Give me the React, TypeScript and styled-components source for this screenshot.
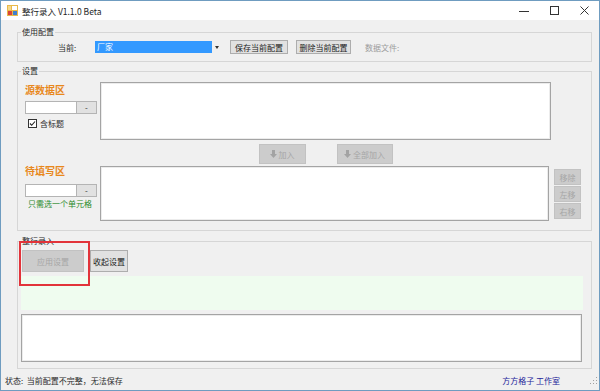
import React from 'react';
import styled, { createGlobalStyle } from 'styled-components';

const GlobalStyle = createGlobalStyle`
  html, body {
    margin: 0;
    padding: 0;
    background: #f0f0f0;
  }
  body {
    font-family: "Noto Sans CJK SC", "Noto Sans", sans-serif;
    font-size: 8px;
    color: #2b2b2b;
  }
  * {
    box-sizing: border-box;
  }
`;

const Window = styled.div`
  width: 600px;
  height: 391px;
  border: 1px solid #6f9cc0;
  background: #f0f0f0;
  display: flex;
  flex-direction: column;
  overflow: hidden;
`;

const TitleBar = styled.div`
  height: 19px;
  background: #ffffff;
  display: flex;
  align-items: center;
  padding-left: 6px;
`;

const TitleText = styled.span`
  margin-left: 4px;
  font-size: 8.5px;
  color: #1e1e1e;
  flex: 1;
`;

const WinButton = styled.div`
  width: 30px;
  height: 19px;
  display: flex;
  align-items: center;
  justify-content: center;
`;

const Body = styled.div`
  flex: 1;
  padding: 6px 7px 0 16px;
`;

const Group = styled.fieldset<{ $top: number }>`
  margin: ${(p) => p.$top}px 0 0;
  padding: 0;
  min-width: 0;
  border: 1px solid #d6d6d6;
  border-radius: 0;
`;

const Legend = styled.legend`
  margin-left: 3px;
  padding: 0 1px;
  font-size: 8px;
  line-height: 12px;
  color: #2b2b2b;
`;

const ConfigRow = styled.div`
  display: flex;
  align-items: center;
  height: 14px;
  margin: 2px 0 7px;
  padding-left: 40px;
`;

const FieldLabel = styled.span`
  width: 37px;
`;

const Combo = styled.div`
  width: 127px;
  height: 12px;
  display: flex;
  align-items: center;
`;

const ComboValue = styled.div`
  width: 117px;
  height: 12px;
  background: #3399ff;
  color: #ffffff;
  line-height: 12px;
  padding-left: 2px;
`;

const ComboArrow = styled.div`
  flex: 1;
  display: flex;
  justify-content: center;
  &::after {
    content: '';
    border-left: 2px solid transparent;
    border-right: 2px solid transparent;
    border-top: 3px solid #333;
  }
`;

const Button = styled.button<{ $w: number; $h: number; $gap?: number; $off?: boolean }>`
  width: ${(p) => p.$w}px;
  height: ${(p) => p.$h}px;
  margin: 0 0 0 ${(p) => p.$gap ?? 0}px;
  padding: 0;
  font-family: inherit;
  font-size: 8px;
  color: ${(p) => (p.$off ? '#a6a6a6' : '#222')};
  background: ${(p) => (p.$off ? '#cccccc' : '#e1e1e1')};
  border: 1px solid ${(p) => (p.$off ? '#c2c2c2' : '#adadad')};
  display: flex;
  align-items: center;
  justify-content: center;
  gap: 2px;
`;

const DataLabel = styled.span`
  margin-left: 14px;
  color: #9c9c9c;
`;

const Settings = styled.div`
  padding: 0 0 9px 7px;
`;

const AreaRow = styled.div<{ $top: number }>`
  display: flex;
  align-items: flex-start;
  margin-top: ${(p) => p.$top}px;
`;

const LeftCol = styled.div`
  width: 72px;
  margin-right: 3px;
  display: flex;
  flex-direction: column;
`;

const AreaTitle = styled.div<{ $top: number }>`
  margin-top: ${(p) => p.$top}px;
  font-size: 10px;
  line-height: 10px;
  font-weight: 700;
  color: #e8881c;
`;

const RangeInput = styled.div<{ $top: number }>`
  margin-top: ${(p) => p.$top}px;
  height: 13px;
  display: flex;
  border: 1px solid #b4b4b4;
  background: #ffffff;
`;

const RangeText = styled.div`
  flex: 1;
`;

const RangePick = styled.div`
  width: 20px;
  background: #e1e1e1;
  border-left: 1px solid #b4b4b4;
  display: flex;
  align-items: center;
  justify-content: center;
  font-size: 8px;
  line-height: 8px;
`;

const CheckRow = styled.label`
  margin-top: 5px;
  padding-left: 3px;
  display: flex;
  align-items: center;
  gap: 3px;
  line-height: 9px;
`;

const CheckBox = styled.span`
  width: 9px;
  height: 9px;
  border: 1px solid #333;
  background: #fff;
  display: flex;
  align-items: center;
  justify-content: center;
`;

const Hint = styled.div`
  margin-top: 2px;
  padding-left: 3px;
  line-height: 9px;
  color: #2a8a2a;
`;

const TextBox = styled.div<{ $w: number; $h: number }>`
  width: ${(p) => p.$w}px;
  height: ${(p) => p.$h}px;
  background: #ffffff;
  border: 1px solid #a4a4a4;
  box-shadow: inset 0 0 0 1px #ececec;
`;

const ActionRow = styled.div`
  margin: 4px 0 0 75px;
  width: 451px;
  display: flex;
  justify-content: center;
  gap: 31px;
`;

const SideCol = styled.div`
  margin: 3px 0 0 5px;
  display: flex;
  flex-direction: column;
  gap: 1px;
`;

const Entry = styled.div`
  padding: 0 8px 6px 3px;
`;

const EntryButtons = styled.div`
  position: relative;
  margin-top: 3px;
  padding-left: 1px;
  display: flex;
`;

const Highlight = styled.div`
  position: absolute;
  left: -2px;
  top: -9px;
  width: 71px;
  height: 45px;
  border: 2px solid #e2333a;
  pointer-events: none;
`;

const LogArea = styled.div`
  margin-top: 4px;
  height: 34px;
  background: #effcef;
`;

const StatusBar = styled.div`
  height: 19px;
  display: flex;
  align-items: center;
  padding: 0 1px 0 4px;
`;

const StatusText = styled.span`
  flex: 1;
`;

const Credit = styled.span`
  color: #24249a;
  margin-right: 30px;
`;

const DownArrow = () => (
  <svg width="7" height="8" viewBox="0 0 7 8">
    <path d="M2 0h3v4h2L3.5 8 0 4h2z" fill="#a3a3a3" />
  </svg>
);

const AppIcon = () => (
  <svg width="11" height="11" viewBox="0 0 11 11">
    <rect x="0" y="0" width="11" height="11" fill="#e9b949" />
    <rect x="5" y="1" width="5" height="4" fill="#ffffff" />
    <rect x="1" y="6" width="4" height="4" fill="#d9443a" />
    <rect x="6" y="6" width="4" height="4" fill="#3f7fd0" />
    <rect x="1" y="1" width="3" height="4" fill="#f5d98c" />
  </svg>
);

export default function App() {
  return (
    <>
      <GlobalStyle />
      <Window>
        <TitleBar>
          <AppIcon />
          <TitleText>整行录入 V1.1.0 Beta</TitleText>
          <WinButton>
            <svg width="10" height="10" viewBox="0 0 10 10">
              <path d="M0 5.5h10" stroke="#333" />
            </svg>
          </WinButton>
          <WinButton>
            <svg width="9" height="9" viewBox="0 0 9 9">
              <rect x="0.5" y="0.5" width="8" height="8" fill="none" stroke="#333" />
            </svg>
          </WinButton>
          <WinButton>
            <svg width="9" height="9" viewBox="0 0 9 9">
              <path d="M0.5 0.5l8 8M8.5 0.5l-8 8" stroke="#333" />
            </svg>
          </WinButton>
        </TitleBar>

        <Body>
          <Group $top={0}>
            <Legend>使用配置</Legend>
            <ConfigRow>
              <FieldLabel>当前:</FieldLabel>
              <Combo>
                <ComboValue>厂家</ComboValue>
                <ComboArrow />
              </Combo>
              <Button $w={58} $h={14} $gap={8}>保存当前配置</Button>
              <Button $w={55} $h={14} $gap={8}>删除当前配置</Button>
              <DataLabel>数据文件:</DataLabel>
            </ConfigRow>
          </Group>

          <Group $top={3}>
            <Legend>设置</Legend>
            <Settings>
              <AreaRow $top={5}>
                <LeftCol>
                  <AreaTitle $top={3}>源数据区</AreaTitle>
                  <RangeInput $top={6}>
                    <RangeText />
                    <RangePick>-</RangePick>
                  </RangeInput>
                  <CheckRow>
                    <CheckBox>
                      <svg width="7" height="7" viewBox="0 0 7 7">
                        <path d="M1 3.5l1.7 1.8L6 1.5" fill="none" stroke="#222" strokeWidth="1.1" />
                      </svg>
                    </CheckBox>
                    含标题
                  </CheckRow>
                </LeftCol>
                <TextBox $w={451} $h={58} />
              </AreaRow>

              <ActionRow>
                <Button $w={47} $h={20} $off>
                  <DownArrow />
                  加入
                </Button>
                <Button $w={56} $h={20} $off>
                  <DownArrow />
                  全部加入
                </Button>
              </ActionRow>

              <AreaRow $top={2}>
                <LeftCol>
                  <AreaTitle $top={0}>待填写区</AreaTitle>
                  <RangeInput $top={8}>
                    <RangeText />
                    <RangePick>-</RangePick>
                  </RangeInput>
                  <Hint>只需选一个单元格</Hint>
                </LeftCol>
                <TextBox $w={449} $h={55} />
                <SideCol>
                  <Button $w={27} $h={16} $off>移除</Button>
                  <Button $w={27} $h={16} $off>左移</Button>
                  <Button $w={27} $h={16} $off>右移</Button>
                </SideCol>
              </AreaRow>
            </Settings>
          </Group>

          <Group $top={4}>
            <Legend>整行录入</Legend>
            <Entry>
              <EntryButtons>
                <Button $w={62} $h={22} $off>应用设置</Button>
                <Button $w={38} $h={22} $gap={6}>收起设置</Button>
                <Highlight />
              </EntryButtons>
              <LogArea />
              <TextBox $w={561} $h={48} style={{ marginTop: 4 }} />
            </Entry>
          </Group>
        </Body>

        <StatusBar>
          <StatusText>状态:&nbsp; 当前配置不完整，无法保存</StatusText>
          <Credit>方方格子 工作室</Credit>
          <svg width="8" height="8" viewBox="0 0 8 8">
            <g fill="#a0a0a0">
              <rect x="6" y="0" width="1" height="1" />
              <rect x="3" y="3" width="1" height="1" />
              <rect x="6" y="3" width="1" height="1" />
              <rect x="0" y="6" width="1" height="1" />
              <rect x="3" y="6" width="1" height="1" />
              <rect x="6" y="6" width="1" height="1" />
            </g>
          </svg>
        </StatusBar>
      </Window>
    </>
  );
}
